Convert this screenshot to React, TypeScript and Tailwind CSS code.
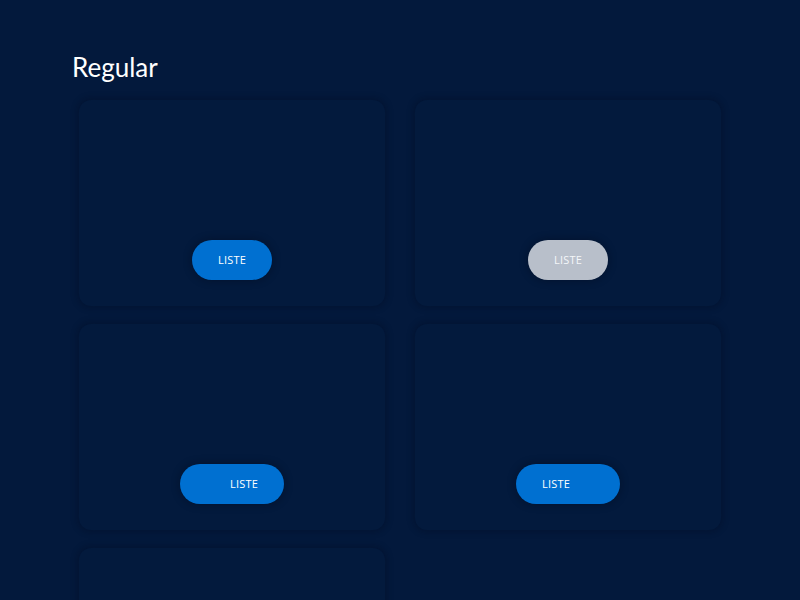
import React from 'react';

type Variant = {
    tone: 'primary' | 'disabled';
    iconSide?: 'left' | 'right';
    hidden?: boolean;
};

const variants: Array<Variant> = [
    { tone: 'primary' },
    { tone: 'disabled' },
    { tone: 'primary', iconSide: 'left' },
    { tone: 'primary', iconSide: 'right' },
    { tone: 'primary', hidden: true },
];

const ListeButton = ({ tone, iconSide }: Variant) => {
    const color = tone === 'primary' ? 'bg-[#0070d1] text-white' : 'bg-[#b8bfca] text-[#f4f6f9]';
    return (
        <button
            className={`flex h-10 items-center gap-2 rounded-full ${color} shadow-[0_0_8px_rgba(0,8,24,0.45)] text-[11px] font-medium tracking-[0.02em] ${iconSide === 'left' ? 'pl-[26px] pr-[26px] flex-row' : iconSide === 'right' ? 'pl-[26px] pr-[26px] flex-row-reverse' : 'w-20 justify-center'}`}
            style={{ fontFamily: '"Open Sans", "Noto Sans", sans-serif' }}
        >
            {/* Icon slot stays empty, same as the reference */}
            {iconSide && <span className="block h-4 w-4" />}
            <span>LISTE</span>
        </button>
    );
};

export default function App() {
    return (
        <div className="h-screen w-full bg-[#03193c] overflow-hidden">
            <div className="pt-[51px] pl-[72px]">
                <h1 className="text-[26px] leading-8 text-white" style={{ fontFamily: 'Lato, "Open Sans", sans-serif' }}>
                    Regular
                </h1>
            </div>

            {/* Card grid */}
            <div className="ml-[79px] mt-[17px] grid w-[642px] grid-cols-2 gap-x-[30px] gap-y-[18px]">
                {variants.map((v, index) => (
                    <div
                        key={index}
                        className="flex h-[206px] flex-col items-center rounded-xl bg-[#031a3d] pt-[140px] shadow-[0_0_6px_2px_rgba(0,10,30,0.3)]"
                    >
                        {!v.hidden && <ListeButton {...v} />}
                    </div>
                ))}
            </div>
        </div>
    );
}
